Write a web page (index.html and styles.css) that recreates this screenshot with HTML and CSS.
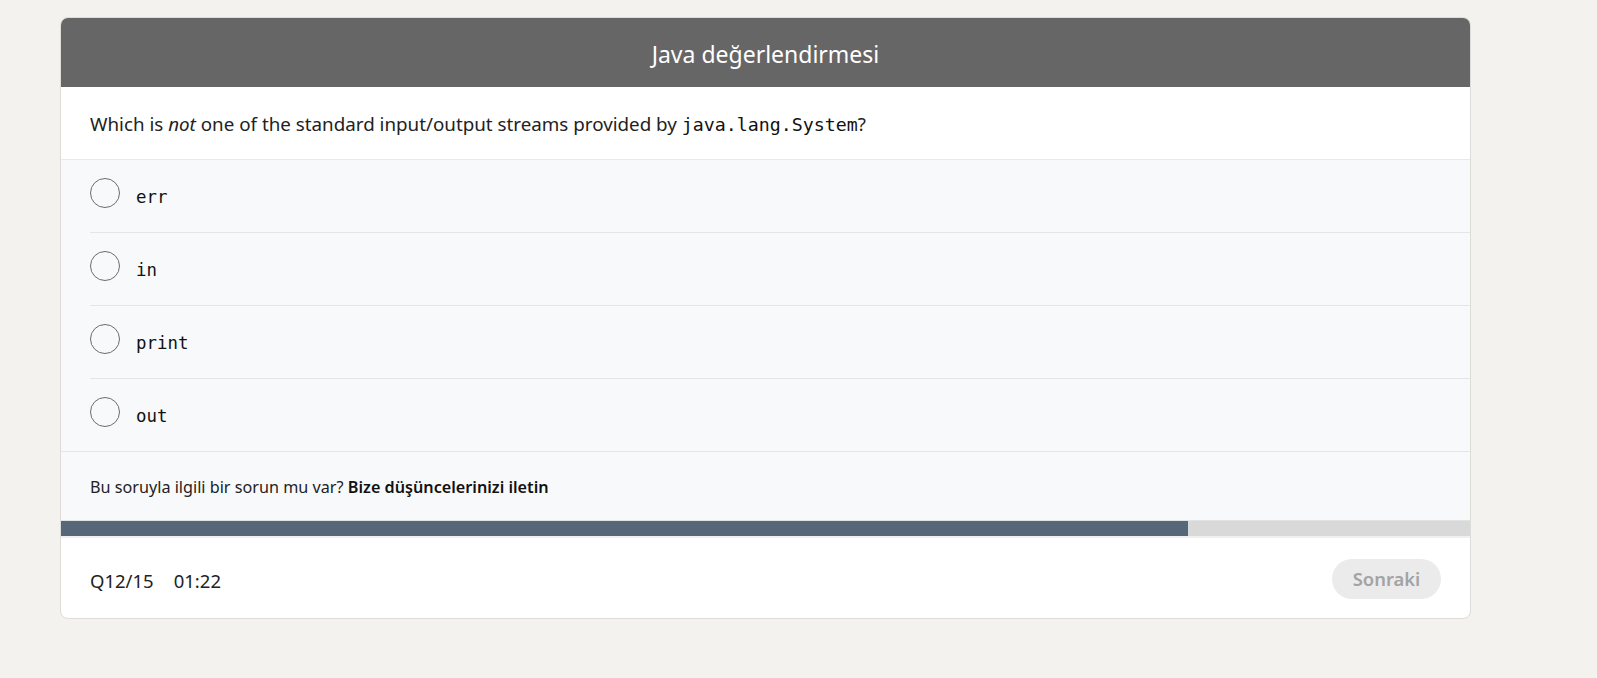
FILE: index.html
```html
<!DOCTYPE html>
<html lang="tr">
<head>
<meta charset="utf-8">
<title>Java değerlendirmesi</title>
<link rel="stylesheet" href="styles.css">
</head>
<body>
<div class="card">
  <div class="card-header">Java değerlendirmesi</div>
  <div class="question">Which is <em>not</em> one of the standard input/output streams provided by <code class="code-q">java.lang.System</code>?</div>
  <div class="options">
    <label class="option"><span class="radio"></span><code class="code-o">err</code></label>
    <label class="option"><span class="radio"></span><code class="code-o">in</code></label>
    <label class="option"><span class="radio"></span><code class="code-o">print</code></label>
    <label class="option option-last"><span class="radio"></span><code class="code-o">out</code></label>
  </div>
  <div class="feedback">Bu soruyla ilgili bir sorun mu var? <strong>Bize düşüncelerinizi iletin</strong></div>
  <div class="progress"><div class="progress-fill" style="width: 80%"></div></div>
  <div class="footer">
    <div class="meta"><span>Q12/15</span><span>01:22</span></div>
    <button class="next" disabled>Sonraki</button>
  </div>
</div>
</body>
</html>
```
FILE: styles.css
```css
html, body {
  margin: 0;
  padding: 0;
}
body {
  background: #f3f2ef;
  font-family: "Noto Sans", "Open Sans", sans-serif;
  color: #1f1f1f;
  padding: 17px 0 0 60px;
  height: 678px;
  box-sizing: border-box;
}
.card {
  width: 1411px;
  box-sizing: border-box;
  border: 1px solid #dedcd8;
  border-radius: 8px;
  overflow: hidden;
  background: #fff;
}
.card-header {
  height: 69px;
  background: #666666;
  color: #fff;
  font-size: 23px;
  display: flex;
  align-items: center;
  justify-content: center;
  padding-top: 2px;
  box-sizing: border-box;
}
.question {
  height: 72px;
  display: flex;
  align-items: center;
  padding: 0 29px;
  font-size: 18.8px;
  color: #222;
  box-sizing: border-box;
  padding-top: 1px;
  white-space: pre;
}
.code-q {
  font-family: "DejaVu Sans Mono", "Liberation Mono", monospace;
  font-size: 18.3px;
  color: #111;
  margin-top: 1px;
}
.options {
  background: #f8f9fa;
  border-top: 1px solid #e8e9eb;
}
.option {
  display: flex;
  align-items: center;
  height: 73px;
  margin-left: 29px;
  border-bottom: 1px solid #e4e5e7;
  gap: 16px;
  padding-bottom: 7px;
  box-sizing: border-box;
}
.option-last {
  margin-left: 0;
  padding-left: 29px;
}
.radio {
  width: 28px;
  height: 28px;
  border: 1px solid #6c6c6c;
  border-radius: 50%;
  flex: none;
}
.code-o {
  font-family: "DejaVu Sans Mono", "Liberation Mono", monospace;
  font-size: 17.4px;
  color: #111;
  margin-top: 8px;
}
.feedback {
  height: 69px;
  background: #f8f9fa;
  display: flex;
  align-items: center;
  padding: 0 29px;
  font-size: 16.2px;
  color: #222;
  border-bottom: 1px solid #e2e3e5;
  box-sizing: border-box;
  padding-top: 2px;
  white-space: pre;
}
.feedback strong {
  font-weight: 600;
  color: #111;
}
.progress {
  height: 15px;
  background: #d9d9d9;
  border-bottom: 2px solid #f0f0f0;
}
.progress-fill {
  height: 100%;
  background: #566779;
}
.footer {
  height: 80px;
  display: flex;
  align-items: center;
  justify-content: space-between;
  padding: 0 29px;
  box-sizing: border-box;
}
.meta {
  display: flex;
  gap: 20px;
  font-size: 18.5px;
  color: #222;
  padding-top: 4px;
}
.next {
  width: 109px;
  height: 40px;
  border: none;
  border-radius: 20px;
  background: #ebebeb;
  color: #a3a3a3;
  font-family: "Noto Sans", "Open Sans", sans-serif;
  font-size: 18.4px;
  font-weight: 600;
  padding: 0;
  margin-top: 1px;
}
```
